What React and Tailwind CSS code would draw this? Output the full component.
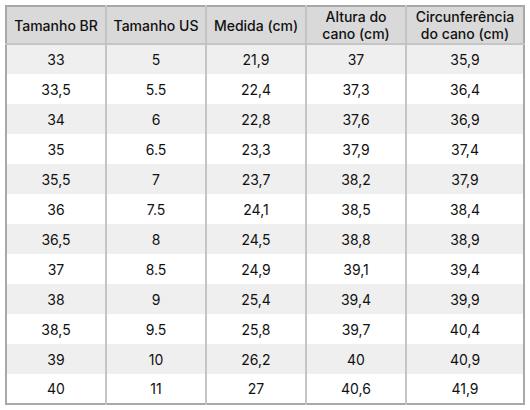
import React from 'react'

const rows = [
  ['33', '5', '21,9', '37', '35,9'],
  ['33,5', '5.5', '22,4', '37,3', '36,4'],
  ['34', '6', '22,8', '37,6', '36,9'],
  ['35', '6.5', '23,3', '37,9', '37,4'],
  ['35,5', '7', '23,7', '38,2', '37,9'],
  ['36', '7.5', '24,1', '38,5', '38,4'],
  ['36,5', '8', '24,5', '38,8', '38,9'],
  ['37', '8.5', '24,9', '39,1', '39,4'],
  ['38', '9', '25,4', '39,4', '39,9'],
  ['38,5', '9.5', '25,8', '39,7', '40,4'],
  ['39', '10', '26,2', '40', '40,9'],
  ['40', '11', '27', '40,6', '41,9'],
]

const headers = [
  ['Tamanho BR'],
  ['Tamanho US'],
  ['Medida (cm)'],
  ['Altura do', 'cano (cm)'],
  ['Circunferência', 'do cano (cm)'],
]

const widths = ['w-[100px]', 'w-[100px]', 'w-[100px]', 'w-[100px]', 'w-[118px]']

export default function App() {
  return (
    <div className="bg-white w-[530px] h-[410px] pt-[5px] pl-[5px] font-['Inter',sans-serif] text-[14px] text-[#111]">
      <table className="border-collapse border-2 border-[#a8a8a8] table-fixed w-[519px]">
        <thead>
          <tr className="bg-[#d9d9d9] h-[38px]">
            {headers.map((h, i) => (
              <th
                key={i}
                className={`${widths[i]} border-x-2 border-b-2 border-[#c4c4c4] font-medium leading-[17px] text-center align-middle first:border-l-[#a8a8a8] last:border-r-[#a8a8a8]`}
              >
                {h.map((line) => (
                  <div key={line}>{line}</div>
                ))}
              </th>
            ))}
          </tr>
        </thead>
        <tbody>
          {rows.map((r, ri) => (
            <tr key={ri} className={`h-[30px] ${ri % 2 === 0 ? 'bg-[#efefef]' : 'bg-white'}`}>
              {r.map((c, ci) => (
                <td
                  key={ci}
                  className="border-x-2 border-[#c4c4c4] text-center align-middle first:border-l-[#a8a8a8] last:border-r-[#a8a8a8]"
                >
                  {c}
                </td>
              ))}
            </tr>
          ))}
        </tbody>
      </table>
    </div>
  )
}
